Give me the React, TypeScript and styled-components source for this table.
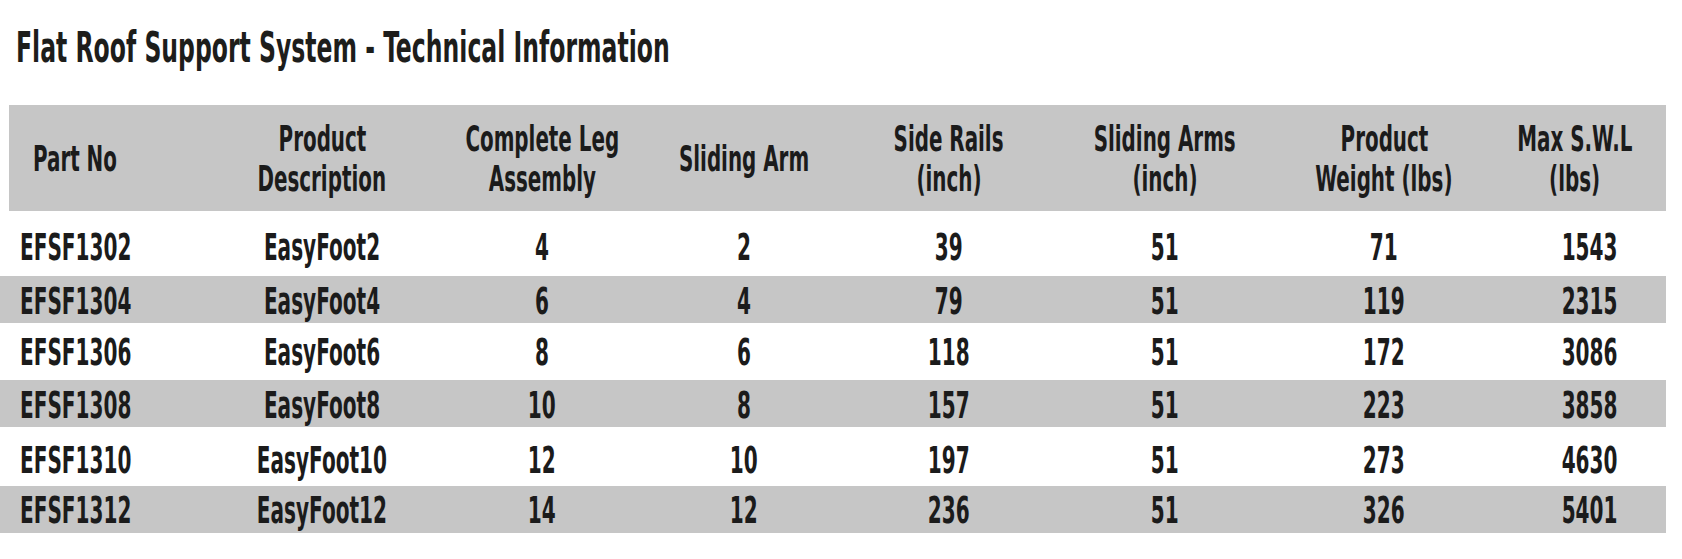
import React, { useMemo } from "react";
import styled, { createGlobalStyle } from "styled-components";

const FONT = `"Liberation Sans Narrow", "DejaVu Sans Condensed", "Liberation Sans", sans-serif`;

const GlobalStyle = createGlobalStyle`
  html, body {
    margin: 0;
    padding: 0;
    background: #ffffff;
  }
  body {
    font-family: ${FONT};
    color: #1b1b1b;
  }
`;

const Page = styled.div`
  width: 1682px;
  height: 559px;
  padding-top: 27px;
  box-sizing: border-box;
  overflow: hidden;
`;

const Title = styled.h1`
  margin: 0 0 36px 0;
  padding-left: 16px;
  font-family: ${FONT};
  font-weight: 700;
  font-size: 42px;
  line-height: 42px;
  color: #1d1d1b;
`;

const Squeeze = styled.span<{ $sx: string; $origin?: string }>`
  display: inline-block;
  white-space: nowrap;
  transform: scaleX(var(${(p) => p.$sx}));
  transform-origin: ${(p) => p.$origin ?? "center"};
`;

const Table = styled.div`
  width: 1666px;
  display: flex;
  flex-direction: column;
`;

const COLS = "212px 220px 220px 184px 226px 206px 232px 166px";
const HEAD_COLS = "203px 220px 220px 184px 226px 206px 232px 166px";

const HeaderBand = styled.div`
  margin-left: 9px;
  height: 106px;
  display: grid;
  grid-template-columns: ${HEAD_COLS};
  background: #c6c6c6;
  font-size: 36px;
  font-weight: 700;
  line-height: 40px;
`;

const HeadCell = styled.div<{ $left?: boolean; $nudge?: number }>`
  display: flex;
  flex-direction: column;
  justify-content: center;
  align-items: ${(p) => (p.$left ? "flex-start" : "center")};
  padding-left: ${(p) => (p.$left ? 24 : Math.max(0, p.$nudge ?? 0))}px;
  padding-right: ${(p) => Math.max(0, -(p.$nudge ?? 0))}px;
  padding-top: 2px;
`;

const Row = styled.div<{ $shade: boolean; $h: number; $pad: number }>`
  height: ${(p) => p.$h}px;
  box-sizing: border-box;
  padding-top: ${(p) => p.$pad}px;
  display: grid;
  grid-template-columns: ${COLS};
  background: ${(p) => (p.$shade ? "#c6c6c6" : "#ffffff")};
  font-size: 38px;
  font-weight: 700;
  line-height: 40px;
`;

const Cell = styled.div<{ $left?: boolean; $nudge?: number }>`
  display: flex;
  align-items: center;
  justify-content: ${(p) => (p.$left ? "flex-start" : "center")};
  padding-left: ${(p) => (p.$left ? 20 : Math.max(0, p.$nudge ?? 0))}px;
  padding-right: ${(p) => Math.max(0, -(p.$nudge ?? 0))}px;
`;

const HEADERS: string[][] = [
  ["Part No"],
  ["Product", "Description"],
  ["Complete Leg", "Assembly"],
  ["Sliding Arm"],
  ["Side Rails", "(inch)"],
  ["Sliding Arms", "(inch)"],
  ["Product", "Weight (lbs)"],
  ["Max S.W.L", "(lbs)"],
];

const ROWS: { cells: string[]; h: number; pad: number }[] = [
  { cells: ["EFSF1302", "EasyFoot2", "4", "2", "39", "51", "71", "1543"], h: 65, pad: 6 },
  { cells: ["EFSF1304", "EasyFoot4", "6", "4", "79", "51", "119", "2315"], h: 47, pad: 3 },
  { cells: ["EFSF1306", "EasyFoot6", "8", "6", "118", "51", "172", "3086"], h: 57, pad: 1 },
  { cells: ["EFSF1308", "EasyFoot8", "10", "8", "157", "51", "223", "3858"], h: 47, pad: 2 },
  { cells: ["EFSF1310", "EasyFoot10", "12", "10", "197", "51", "273", "4630"], h: 59, pad: 7 },
  { cells: ["EFSF1312", "EasyFoot12", "14", "12", "236", "51", "326", "5401"], h: 47, pad: 1 },
];

function inkWidth(text: string, font: string): number {
  if (typeof document === "undefined") return 0;
  const ctx = document.createElement("canvas").getContext("2d");
  if (!ctx) return 0;
  ctx.font = font;
  const m = ctx.measureText(text);
  const w = (m.actualBoundingBoxLeft || 0) + (m.actualBoundingBoxRight || 0);
  return w > 0 ? w : m.width;
}

function scaleFor(text: string, size: number, target: number): number {
  const w = inkWidth(text, `700 ${size}px ${FONT}`);
  if (!w) return 0.7;
  return Math.min(1, target / w);
}

export default function App() {
  const scales = useMemo(
    () => ({
      title: scaleFor("Flat Roof Support System - Technical Information", 42, 650),
      head: scaleFor("Sliding Arms", 36, 140),
      body: scaleFor("EFSF1302", 38, 108),
    }),
    []
  );

  const vars = {
    "--title-sx": String(scales.title),
    "--head-sx": String(scales.head),
    "--body-sx": String(scales.body),
  } as React.CSSProperties;

  return (
    <>
      <GlobalStyle />
      <Page style={vars}>
        <Title>
          <Squeeze $sx="--title-sx" $origin="left">
            Flat Roof Support System - Technical Information
          </Squeeze>
        </Title>
        <Table>
          <HeaderBand>
            {HEADERS.map((lines, i) => (
              <HeadCell key={i} $left={i === 0} $nudge={i === 7 ? -16 : 0}>
                {lines.map((l) => (
                  <Squeeze key={l} $sx="--head-sx" $origin={i === 0 ? "left" : "center"}>
                    {l}
                  </Squeeze>
                ))}
              </HeadCell>
            ))}
          </HeaderBand>
          {ROWS.map((r, ri) => (
            <Row key={r.cells[0]} $shade={ri % 2 === 1} $h={r.h} $pad={r.pad}>
              {r.cells.map((c, ci) => (
                <Cell key={ci} $left={ci === 0} $nudge={ci === 7 ? 14 : 0}>
                  <Squeeze $sx="--body-sx" $origin={ci === 0 ? "left" : "center"}>
                    {c}
                  </Squeeze>
                </Cell>
              ))}
            </Row>
          ))}
        </Table>
      </Page>
    </>
  );
}
